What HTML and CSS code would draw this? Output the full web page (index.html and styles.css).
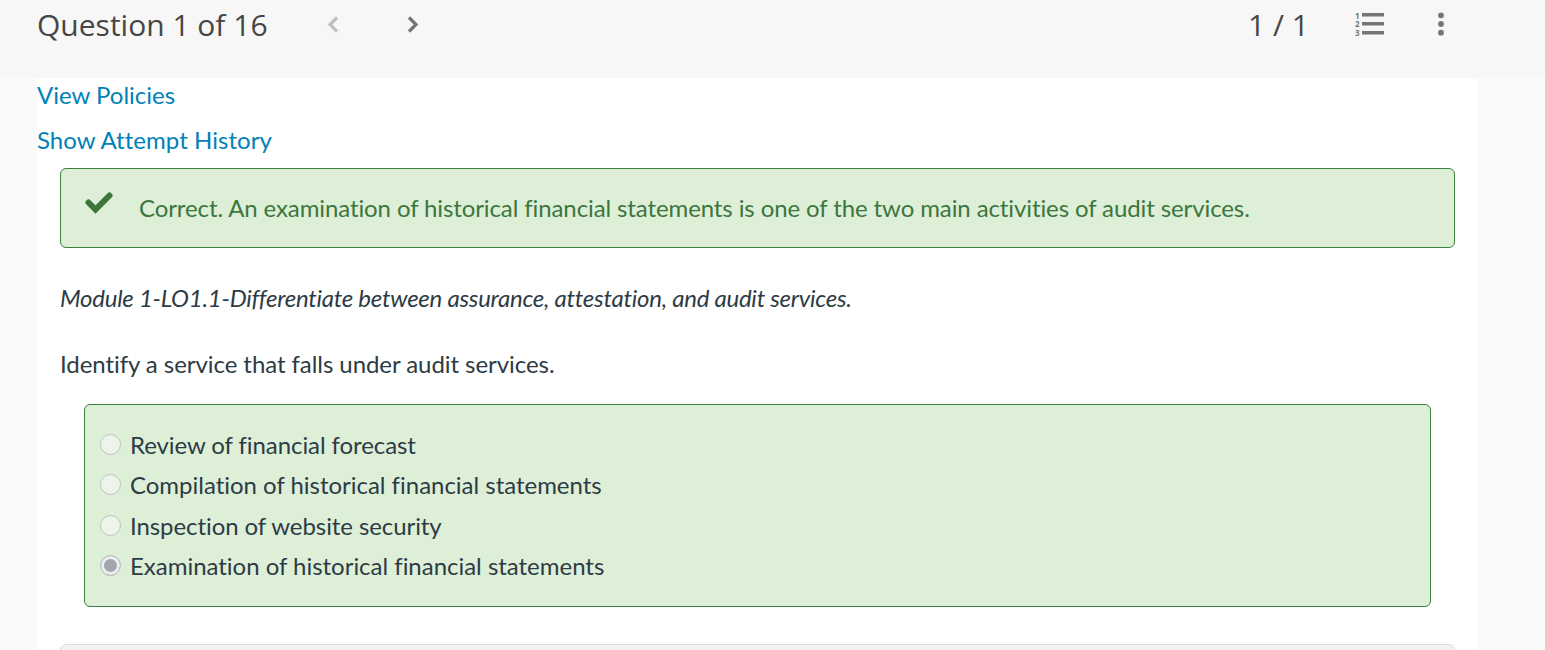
FILE: index.html
```html
<!DOCTYPE html>
<html lang="en">
<head>
<meta charset="utf-8">
<title>Question 1 of 16</title>
<link rel="stylesheet" href="styles.css">
</head>
<body>
<header class="topbar">
  <h1 class="title">Question 1 of 16</h1>
  <nav class="pager">
    <svg class="chev chev-off" width="14" height="22" viewBox="0 0 14 22"><path d="M10 3.500 3 10.500l7 7"/></svg>
    <svg class="chev" width="14" height="22" viewBox="0 0 14 22"><path d="M4 3.500l7 7-7 7"/></svg>
  </nav>
  <div class="tools">
    <span class="score">1 / 1</span>
    <svg class="list-icon" width="30" height="28" viewBox="0 0 30 28">
      <rect x="7" y="2" width="22" height="3.500"/><rect x="7" y="11" width="22" height="3.500"/><rect x="7" y="20" width="22" height="3.500"/>
      <text x="0" y="7.500" class="num">1</text><text x="0" y="16" class="num">2</text><text x="0" y="25" class="num">3</text>
    </svg>
    <svg class="more-icon" width="8" height="26" viewBox="0 0 8 26"><circle cx="4" cy="4.300" r="2.900"/><circle cx="4" cy="13" r="2.900"/><circle cx="4" cy="21.700" r="2.900"/></svg>
  </div>
</header>
<main class="sheet">
  <p class="link-row"><a href="#">View Policies</a></p>
  <p class="link-row"><a href="#" class="history">Show Attempt History</a></p>
  <div class="feedback">
    <svg class="check" width="28" height="22" viewBox="0 0 28 22"><path d="M3.500 10.500l7 7 14-14"/></svg>
    <span class="feedback-text">Correct. An examination of historical financial statements is one of the two main activities of audit services.</span>
  </div>
  <p class="module">Module 1-LO1.1-Differentiate between assurance, attestation, and audit services.</p>
  <p class="prompt">Identify a service that falls under audit services.</p>
  <ul class="answers">
    <li class="answer answer-tight"><span class="radio"></span>Review of financial forecast</li>
    <li class="answer"><span class="radio"></span>Compilation of historical financial statements</li>
    <li class="answer answer-tight"><span class="radio"></span>Inspection of website security</li>
    <li class="answer"><span class="radio radio-on"></span>Examination of historical financial statements</li>
  </ul>
  <div class="next-panel"></div>
</main>
</body>
</html>
```
FILE: styles.css
```css
html, body {
  margin: 0;
  height: 650px;
  overflow: hidden;
  background: #fafafa;
  font-family: "Lato", sans-serif;
  color: #2d3b45;
}
.topbar {
  height: 78px;
  background: #f7f7f7;
  display: flex;
  align-items: flex-start;
  padding: 0 0 0 37px;
  box-sizing: border-box;
}
.title {
  margin: 5px 0 0;
  font: 400 30px/40px "Open Sans", sans-serif;
  color: #464646;
  width: 290px;
}
.pager {
  display: flex;
  gap: 64px;
  padding-top: 14px;
}
.chev { fill: none; stroke: #757575; stroke-width: 3.2; }
.chev-off { stroke: #c0c0c0; }
.tools {
  margin-left: auto;
  display: flex;
  align-items: flex-start;
  padding-right: 100px;
}
.score {
  margin-top: 5px;
  font: 400 30px/40px "Open Sans", sans-serif;
  color: #464646;
}
.list-icon { margin: 11px 0 0 46px; fill: #757575; }
.num { font: 700 8px "Open Sans", sans-serif; }
.more-icon { margin: 11px 0 0 52px; fill: #757575; }
.sheet {
  width: 1440px;
  height: 572px;
  margin-left: 37px;
  background: #fff;
  overflow: hidden;
  font-size: 24px;
}
.link-row { margin: 0 0 15px; padding-top: 2px; line-height: 30px; height: 28px; }
.link-row a { color: #0081b8; text-decoration: none; font-size: 24px; }
.link-row .history { letter-spacing: 0.04px; }
.feedback {
  margin: 0 22px 0 23px;
  height: 80px;
  box-sizing: border-box;
  border: 1px solid #3f7f3f;
  border-radius: 6px;
  background: #deefd8;
  color: #3c763d;
  display: flex;
  align-items: center;
  padding-left: 24px;
  gap: 26px;
}
.feedback-text { letter-spacing: -0.105px; margin-top: -2px; }
.check { fill: none; stroke: #3c763d; stroke-width: 6; stroke-linecap: round; margin-top: -10px; }
.module {
  margin: 36px 0 0 23px;
  font-style: italic;
  line-height: 28px;
  padding-bottom: 2px;
  letter-spacing: -0.25px;
}
.prompt {
  margin: 36px 0 0 23px;
  line-height: 28px;
  padding-bottom: 2px;
  letter-spacing: -0.06px;
}
.answers {
  list-style: none;
  margin: 24px 46px 0 47px;
  padding: 19.7px 16px 20px 15px;
  height: 203px;
  box-sizing: border-box;
  border: 1px solid #3f7f3f;
  border-radius: 6px;
  background: #deefd8;
}
.answer {
  height: 40.4px;
  line-height: 40px;
  display: flex;
  align-items: center;
  gap: 9px;
  letter-spacing: -0.02px;
}
.answer-tight { letter-spacing: -0.08px; }
.radio {
  width: 21px;
  height: 21px;
  box-sizing: border-box;
  border-radius: 50%;
  border: 1.5px solid #bdc2bd;
  background: #edf5ea;
  flex: none;
  margin-top: -1px;
}
.radio-on {
  background: #a4a6ad;
  box-shadow: inset 0 0 0 3px #eceef0;
}
.next-panel {
  margin: 37px 22px 0 23px;
  height: 40px;
  background: #f2f2f2;
  border: 1px solid #dcdcdc;
  border-radius: 6px;
}
```
